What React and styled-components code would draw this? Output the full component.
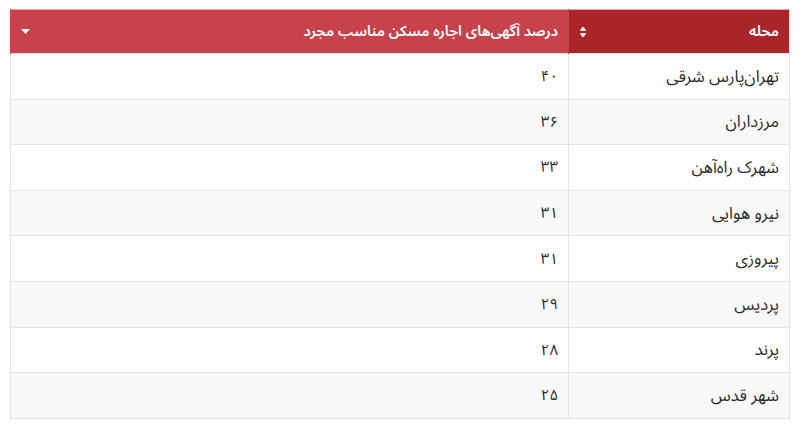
import React from "react";
import styled, { createGlobalStyle } from "styled-components";

const Global = createGlobalStyle`
  html, body { margin: 0; padding: 0; background: #ffffff; }
  body { font-family: "Noto Sans Arabic", "DejaVu Sans", sans-serif; }
`;

const Page = styled.div`
  padding: 9px 11px 0 10px;
`;

const Table = styled.table`
  width: 779px;
  border-collapse: collapse;
  direction: rtl;
  table-layout: fixed;
  border: 1px solid #e2e2e2;
`;

const HeadCell = styled.th`
  height: 44px;
  padding: 0 10px;
  box-sizing: border-box;
  background: ${(p) => (p.$dark ? "#aa2529" : "#c7424a")};
  color: #ffffff;
  font-size: 14.5px;
  font-weight: 600;
  text-align: right;
  width: ${(p) => p.$width};
  border-left: 1px solid ${(p) => (p.$dark ? "#b94047" : "#c7424a")};
  border-top: 1px solid #e7a7aa;
`;

const HeadInner = styled.div`
  display: flex;
  align-items: center;
  justify-content: space-between;
`;

const Row = styled.tr`
  background: ${(p) => (p.$alt ? "#f8f8f8" : "#ffffff")};
`;

const Cell = styled.td`
  height: 45.6px;
  padding: 0 10px;
  box-sizing: border-box;
  border: 1px solid #e3e3e3;
  color: #2a2a2a;
  font-size: ${(p) => (p.$num ? "15px" : "16.5px")};
  text-align: right;
`;

const SortIcon = () => (
  <svg width="8" height="12" viewBox="0 0 8 12" style={{ display: "block" }}>
    <path d="M4 0.5 L7.5 4.8 L0.5 4.8 Z" fill="#fff" />
    <path d="M4 11.5 L7.5 7.2 L0.5 7.2 Z" fill="#fff" />
  </svg>
);

const Caret = () => (
  <svg width="9" height="5" viewBox="0 0 9 5" style={{ display: "block" }}>
    <path d="M0 0 L9 0 L4.5 5 Z" fill="#fff" />
  </svg>
);

const rows = [
  ["تهران‌پارس شرقی", "۴۰"],
  ["مرزداران", "۳۶"],
  ["شهرک راه‌آهن", "۳۳"],
  ["نیرو هوایی", "۳۱"],
  ["پیروزی", "۳۱"],
  ["پردیس", "۲۹"],
  ["پرند", "۲۸"],
  ["شهر قدس", "۲۵"],
];

export default function App() {
  return (
    <>
      <Global />
      <Page>
        <Table>
          <thead>
            <tr>
              <HeadCell $dark $width="221px">
                <HeadInner>
                  <span>محله</span>
                  <SortIcon />
                </HeadInner>
              </HeadCell>
              <HeadCell $width="558px">
                <HeadInner>
                  <span>درصد آگهی‌های اجاره مسکن مناسب مجرد</span>
                  <Caret />
                </HeadInner>
              </HeadCell>
            </tr>
          </thead>
          <tbody>
            {rows.map(([name, val], i) => (
              <Row key={i} $alt={i % 2 === 1}>
                <Cell>{name}</Cell>
                <Cell $num>{val}</Cell>
              </Row>
            ))}
          </tbody>
        </Table>
      </Page>
    </>
  );
}
